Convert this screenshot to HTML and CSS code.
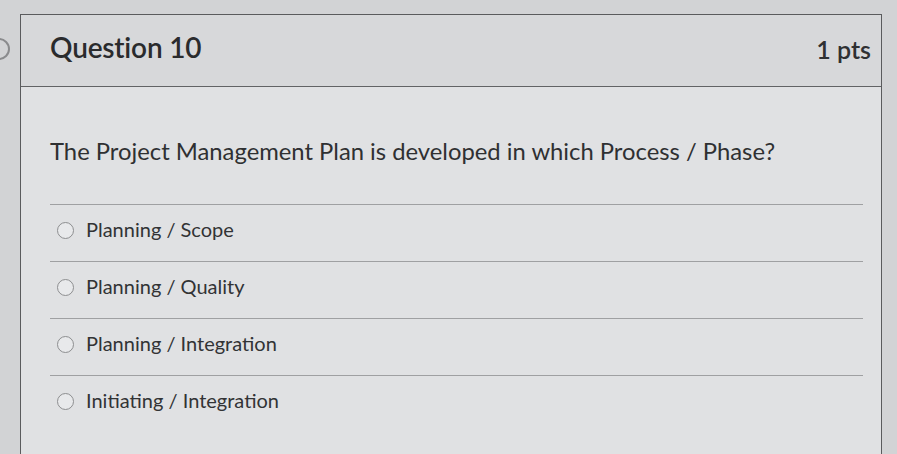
FILE: index.html
```html
<!DOCTYPE html>
<html lang="en">
<head>
<meta charset="utf-8">
<title>Question 10</title>
<link rel="stylesheet" href="styles.css">
</head>
<body>
<div class="page">
  <div class="edge-mark"></div>
  <div class="card">
    <div class="card-header">
      <h2 class="q-title">Question 10</h2>
      <span class="q-points">1 pts</span>
    </div>
    <div class="card-body">
      <p class="q-text">The Project Management Plan is developed in which Process / Phase?</p>
      <div class="answers">
        <label class="answer"><span class="radio"></span><span class="answer-text">Planning / Scope</span></label>
        <label class="answer"><span class="radio"></span><span class="answer-text">Planning / Quality</span></label>
        <label class="answer"><span class="radio"></span><span class="answer-text">Planning / Integration</span></label>
        <label class="answer"><span class="radio"></span><span class="answer-text">Initiating / Integration</span></label>
      </div>
    </div>
  </div>
</div>
</body>
</html>
```

FILE: styles.css
```css
html, body {
  margin: 0;
  padding: 0;
}
body {
  width: 897px;
  height: 454px;
  overflow: hidden;
  background: #d2d3d5;
  font-family: Lato, "Open Sans", "Liberation Sans", sans-serif;
  color: #2b2c2e;
}
.page {
  position: relative;
  padding: 14px 0 0 20px;
}
.edge-mark {
  position: absolute;
  left: -12px;
  top: 38px;
  width: 18px;
  height: 18px;
  border: 2px solid #8a8b8d;
  border-radius: 50%;
}
.card {
  width: 862px;
  height: 460px;
  border: 1px solid #5a5b5d;
  border-bottom: none;
  background: #e0e1e3;
  box-sizing: border-box;
}
.card-header {
  height: 72px;
  box-sizing: border-box;
  border-bottom: 1px solid #626365;
  background: #d7d8da;
  display: flex;
  align-items: center;
  justify-content: space-between;
  padding: 0 10px 0 29px;
}
.q-title {
  margin: 0;
  font-size: 28px;
  font-weight: 600;
  color: #2a2b2d;
  letter-spacing: -0.2px;
  position: relative;
  top: -4px;
}
.q-points {
  font-size: 25px;
  font-weight: 600;
  color: #2f3032;
  position: relative;
  top: -2px;
}
.card-body {
  padding: 48px 18px 0 29px;
}
.q-text {
  margin: 0 0 37px 0;
  font-size: 23.8px;
  line-height: 32px;
  color: #2f3032;
}
.answers {
  display: flex;
  flex-direction: column;
}
.answer {
  display: flex;
  align-items: center;
  gap: 12px;
  height: 57px;
  padding: 0 0 6px 7px;
  border-top: 1px solid #9fa0a2;
  box-sizing: border-box;
}
.radio {
  width: 15px;
  height: 15px;
  border: 1.5px solid #8d8e90;
  border-radius: 50%;
  background: #e8e9eb;
  flex: none;
  box-sizing: border-box;
  width: 17px;
  height: 17px;
}
.answer-text {
  font-size: 20px;
  color: #323335;
  position: relative;
  top: -1px;
}
```
